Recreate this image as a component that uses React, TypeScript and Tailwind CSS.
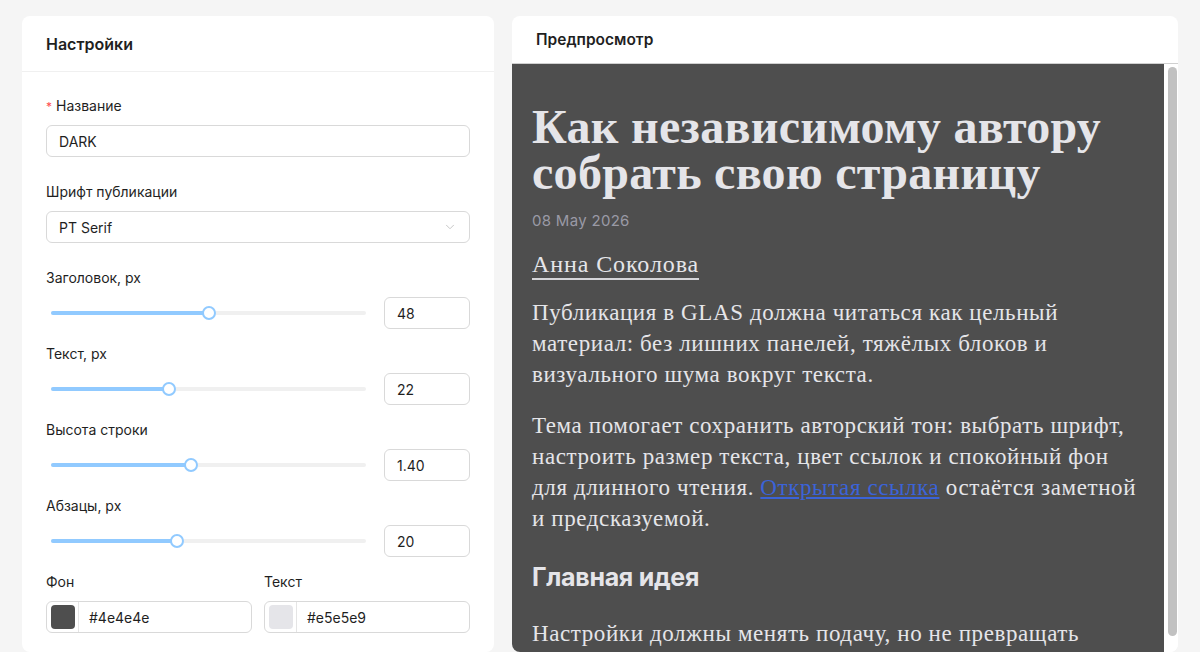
import { ChevronDown } from 'lucide-react';

const sans = "font-['Inter','Liberation_Sans',sans-serif]";
const serif = "font-['Liberation_Serif','DejaVu_Serif',serif]";

interface SliderFieldProps {
  label: string;
  value: string;
  percent: number;
}

function SliderField({ label, value, percent }: SliderFieldProps) {
  return (
    <div className="mb-[14px]">
      <div className="h-[22px] leading-[22px] text-[14px] text-[#1f1f1f] mb-2">{label}</div>
      <div className="flex items-center h-8">
        <div className="relative w-[315px] ml-[5px] h-1 rounded-full bg-[#f0f0f0]">
          <div className="absolute left-0 top-0 h-1 rounded-full bg-[#91caff]" style={{ width: `${percent}%` }} />
          <div
            className="absolute top-1/2 w-[14px] h-[14px] -mt-[7px] -ml-[7px] rounded-full bg-white border-2 border-[#91caff]"
            style={{ left: `${percent}%` }}
          />
        </div>
        <div className="ml-auto w-[86px] h-8 rounded-md border border-[#d9d9d9] px-3 flex items-center text-[14px] text-[#1f1f1f]">
          {value}
        </div>
      </div>
    </div>
  );
}

function ColorField({ label, color }: { label: string; color: string }) {
  return (
    <div className="flex-1">
      <div className="h-[22px] leading-[22px] text-[14px] text-[#1f1f1f] mb-2">{label}</div>
      <div className="h-8 rounded-md border border-[#d9d9d9] flex items-center">
        <div className="w-[32px] h-full flex items-center justify-center border-r border-[#e5e5e5]">
          <div className="w-6 h-6 rounded-[4px]" style={{ backgroundColor: color }} />
        </div>
        <span className="pl-[10px] text-[14px] text-[#1f1f1f]">{color}</span>
      </div>
    </div>
  );
}

export default function App() {
  return (
    <div className={`${sans} h-[652px] overflow-hidden bg-[#f5f5f5] flex gap-[18px] px-[22px] pt-4`}>
      {/* settings */}
      <div className="w-[472px] shrink-0 bg-white rounded-lg">
        <div className="h-14 px-6 flex items-center border-b border-[#f0f0f0]">
          <h2 className="text-[16px] font-semibold text-[#1f1f1f]">Настройки</h2>
        </div>
        <div className="px-6 pt-[23px]">
          <div className="mb-6">
            <div className="h-[22px] leading-[22px] text-[14px] text-[#1f1f1f] mb-2">
              <span className="text-[#ff4d4f] mr-1 text-[12px]">*</span>Название
            </div>
            <div className="h-8 rounded-md border border-[#d9d9d9] px-3 flex items-center text-[14px] text-[#1f1f1f]">DARK</div>
          </div>
          <div className="mb-6">
            <div className="h-[22px] leading-[22px] text-[14px] text-[#1f1f1f] mb-2">Шрифт публикации</div>
            <div className="h-8 rounded-md border border-[#d9d9d9] px-3 flex items-center justify-between text-[14px] text-[#1f1f1f]">
              <span>PT Serif</span>
              <ChevronDown className="w-[14px] h-[14px] text-[#bfbfbf]" strokeWidth={1.5} />
            </div>
          </div>
          <SliderField label="Заголовок, px" value="48" percent={50} />
          <SliderField label="Текст, px" value="22" percent={37.5} />
          <SliderField label="Высота строки" value="1.40" percent={44.5} />
          <SliderField label="Абзацы, px" value="20" percent={40} />
          <div className="flex gap-3">
            <ColorField label="Фон" color="#4e4e4e" />
            <ColorField label="Текст" color="#e5e5e9" />
          </div>
        </div>
      </div>

      {/* preview */}
      <div className="flex-1 bg-white rounded-lg flex flex-col overflow-hidden">
        <div className="h-[47px] shrink-0 px-6 flex items-center">
          <h2 className="text-[15.5px] font-semibold text-[#1f1f1f]">Предпросмотр</h2>
        </div>
        <div className="flex-1 flex border-t border-[#d0d0d0]">
          <div className="flex-1 bg-[#4e4e4e] px-5 pt-10 text-[#e5e5e9]">
            <h1 className={`${serif} font-bold text-[48px] leading-[46px] tracking-[0.3px]`}>
              Как независимому автору<br />собрать свою страницу
            </h1>
            <div className="mt-[14px] text-[15px] leading-[22px] tracking-[0.3px] text-[#9a9aa6]">08 May 2026</div>
            <div className="mt-[18px]">
              <span className={`${serif} text-[24px] leading-[28px] tracking-[0.9px] border-b-2 border-[#d5d5d9] inline-block`}>Анна Соколова</span>
            </div>
            <div className={`${serif} text-[23px] leading-[31px] tracking-[0.6px] mt-[17px]`}>
              <p className="mb-5">
                Публикация в GLAS должна читаться как цельный<br />
                материал: без лишних панелей, тяжёлых блоков и<br />
                визуального шума вокруг текста.
              </p>
              <p>
                Тема помогает сохранить авторский тон: выбрать шрифт,<br />
                настроить размер текста, цвет ссылок и спокойный фон<br />
                для длинного чтения.{' '}
                <a className="text-[#3b63d8] underline">Открытая ссылка</a> остаётся заметной<br />
                и предсказуемой.
              </p>
            </div>
            <h3 className="mt-[27px] text-[25px] leading-8 font-bold tracking-[-0.3px]">Главная идея</h3>
            <p className={`${serif} text-[23px] leading-[31px] tracking-[0.6px] mt-[25px]`}>
              Настройки должны менять подачу, но не превращать<br />
              чтение в интерфейс.
            </p>
          </div>
          <div className="w-[14px] shrink-0 bg-white pt-[3px] pl-[4px]">
            <div className="w-[9px] h-[569px] rounded-full bg-[#c1c1c1]" />
          </div>
        </div>
      </div>
    </div>
  );
}
